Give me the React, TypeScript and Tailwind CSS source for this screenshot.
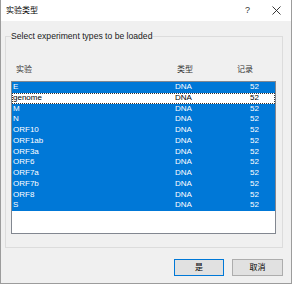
import { useState } from 'react';

interface Experiment {
  name: string;
  type: string;
  count: number;
}

const experiments: Experiment[] = [
  { name: 'E', type: 'DNA', count: 52 },
  { name: 'genome', type: 'DNA', count: 52 },
  { name: 'M', type: 'DNA', count: 52 },
  { name: 'N', type: 'DNA', count: 52 },
  { name: 'ORF10', type: 'DNA', count: 52 },
  { name: 'ORF1ab', type: 'DNA', count: 52 },
  { name: 'ORF3a', type: 'DNA', count: 52 },
  { name: 'ORF6', type: 'DNA', count: 52 },
  { name: 'ORF7a', type: 'DNA', count: 52 },
  { name: 'ORF7b', type: 'DNA', count: 52 },
  { name: 'ORF8', type: 'DNA', count: 52 },
  { name: 'S', type: 'DNA', count: 52 },
];

const font = { fontFamily: '"Liberation Sans", "Noto Sans CJK SC", sans-serif' };

export default function App() {
  const [selected] = useState(experiments.map((e) => e.name !== 'genome'));

  return (
    <div
      className="w-[292px] h-[284px] flex flex-col border-x border-b border-[#9c9c9c] bg-[#f0f0f0] text-[8px] text-black"
      style={font}
    >
      <div className="h-[21px] bg-white flex items-center justify-between pl-[5px] pr-[10px]">
        <span className="text-[8px]">实验类型</span>
        <div className="flex items-center gap-[22px]">
          <span className="text-[9px] text-[#333]">?</span>
          <svg width="9" height="9" viewBox="0 0 9 9">
            <path d="M0.5 0.5L8.5 8.5M8.5 0.5L0.5 8.5" stroke="#222" strokeWidth="0.9" />
          </svg>
        </div>
      </div>

      <div className="flex-1 flex flex-col pl-[4px] pr-[8px] pt-[9px]">
        <fieldset className="border border-[#dcdcdc] pl-[5px] pr-[6px] pb-[13px]">
          <legend className="h-[12px] leading-[12px] px-0 text-[8.6px] text-[#1a1a1a]">
            Select experiment types to be loaded
          </legend>

          <div className="mt-[22px] flex h-[12px] leading-[12px] text-[#333]">
            <span className="w-[166px] pl-[5px]">实验</span>
            <span className="w-[60px]">类型</span>
            <span>记录</span>
          </div>

          <div className="mt-[5px] h-[153px] border border-[#828790] bg-white">
            {experiments.map((exp, i) => (
              <div
                key={exp.name}
                className={
                  selected[i]
                    ? 'flex h-[10.75px] leading-[10.75px] bg-[#0078d7] text-white'
                    : 'flex h-[10.75px] leading-[10.75px] bg-white text-black outline-1 outline-dotted outline-[#333] -outline-offset-1'
                }
              >
                <span className="w-[163px] pl-[1px]">{exp.name}</span>
                <span className="w-[59px]">{exp.type}</span>
                <span className="w-[25px] text-right">{exp.count}</span>
              </div>
            ))}
          </div>
        </fieldset>

        <div className="mt-[11px] flex justify-end gap-[8px]">
          <button className="w-[50px] h-[17px] border border-[#0078d7] bg-[#e1e1e1] text-[8px] leading-none">
            是
          </button>
          <button className="w-[51px] h-[17px] border border-[#adadad] bg-[#e1e1e1] text-[8px] leading-none">
            取消
          </button>
        </div>
      </div>
    </div>
  );
}
